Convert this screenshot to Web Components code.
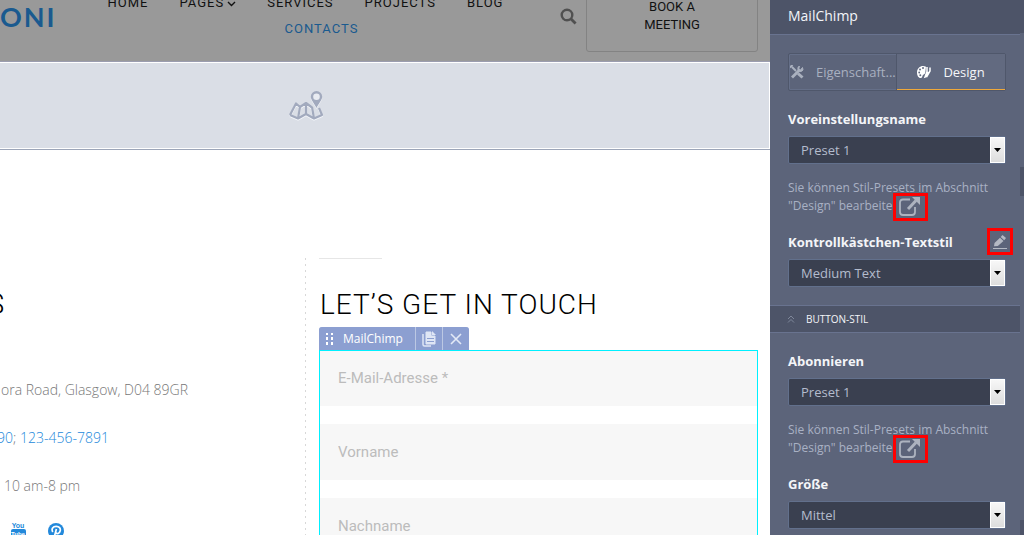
<!DOCTYPE html>
<html lang="de">
<head>
<meta charset="utf-8">
<title>MailChimp – Design</title>
<style>
html,body{margin:0;height:100%}
body{font-family:"Open Sans",sans-serif;background:#fff;overflow:hidden}
</style>
</head>
<body>
<editor-shell>
  <site-header></site-header>
  <map-block></map-block>
  <contact-section>
    <contact-details slot="details"></contact-details>
    <signup-form slot="form"></signup-form>
  </contact-section>
  <settings-panel slot="panel" heading="MailChimp">
    <select-field label="Voreinstellungsname" value="Preset 1"></select-field>
    <preset-hint>Sie können Stil-Presets im Abschnitt "Design" bearbeiten</preset-hint>
    <select-field label="Kontrollkästchen-Textstil" value="Medium Text" editable></select-field>
    <section-bar>BUTTON-STIL</section-bar>
    <select-field label="Abonnieren" value="Preset 1"></select-field>
    <preset-hint>Sie können Stil-Presets im Abschnitt "Design" bearbeiten</preset-hint>
    <select-field label="Größe" value="Mittel"></select-field>
  </settings-panel>
</editor-shell>

<script>
const define = (name, html) => customElements.define(name, class extends HTMLElement {
  constructor() {
    super();
    const t = document.createElement('template');
    t.innerHTML = typeof html === 'function' ? html(this) : html;
    this.attachShadow({ mode: 'open' }).append(t.content.cloneNode(true));
  }
});

define('editor-shell', `
<style>
:host{display:grid;grid-template-columns:minmax(0,1fr) 254px;height:100vh;overflow:hidden}
main{display:flex;flex-direction:column;min-height:0;overflow:hidden}
</style>
<main><slot></slot></main><slot name="panel"></slot>`);

define('site-header', `
<style>
:host{display:block;background:#999;overflow:hidden;border-bottom:1px solid #9b9db0;flex:none;font-family:Roboto,"Open Sans",sans-serif}
header{display:flex;align-items:flex-start;margin-top:-40px;height:101px;padding-right:12px}
a{text-decoration:none;color:#111}
.logo{flex:0 0 106px;padding-top:41px;font:700 27px/32px Lato,sans-serif;letter-spacing:2px;color:#1a5a8f}
nav{flex:0 1 399px;padding-top:30px}
ul{display:flex;flex-wrap:wrap;justify-content:center;column-gap:31px;list-style:none;margin:0;padding:0}
li{font-size:13px;line-height:26px;letter-spacing:1px}
.active{margin-left:32px}
.active a{color:#1a5a8f}
svg{display:block}
li svg{display:inline;margin-left:3px}
.search{border:0;background:none;padding:48px 0 0;margin-left:auto;margin-right:9px}
.book{box-sizing:border-box;flex:0 0 172px;height:92px;padding:37px 50px 0;border:1px solid #838383;border-radius:3px;text-align:center;font-size:13px;line-height:18px}
</style>
<header>
<a class="logo" href="#">ONI</a>
<nav><ul>
<li><a href="#">HOME</a></li>
<li><a href="#">PAGES<svg width="9" height="6" viewBox="0 0 9 6"><path d="M1 1l3.500 3.500L8 1" fill="none" stroke="#111" stroke-width="1.400"/></svg></a></li>
<li><a href="#">SERVICES</a></li>
<li><a href="#">PROJECTS</a></li>
<li><a href="#">BLOG</a></li>
<li class="active"><a href="#">CONTACTS</a></li>
</ul></nav>
<button class="search" aria-label="Search"><svg width="17" height="17" viewBox="0 0 17 17"><circle cx="7" cy="7" r="5.300" fill="none" stroke="#505050" stroke-width="2.400"/><path d="M10.800 10.800l4.800 4.800" stroke="#505050" stroke-width="2.800"/></svg></button>
<a class="book" href="#">BOOK A MEETING</a>
</header>`);

define('map-block', `
<style>
:host{display:block;flex:none;border-bottom:1px solid #9ca5b8}
div{height:85px;display:flex;justify-content:center;align-items:center;background:#dadee6;border:1px solid #fff;border-left:0;padding-right:158px}
svg{filter:drop-shadow(0 1px 0 #f4f6fa)}
</style>
<div><svg width="36" height="30" viewBox="0 0 36 30" fill="none" stroke="#a2aabe" stroke-width="2.200" stroke-linejoin="round">
<path d="M2 24L8 12.500l4 3.500 6-4 6 4.500M2 24l8 3.500 8-4.500 8 4.500 8-3.500-3-7M12 16L10 27.500M18 12v11M24 16L26 27.500"/>
<path d="M28.500 0a5.700 5.700 0 0 1 5.700 5.700c0 3-3.500 6.500-5.700 11.300-2.200-4.800-5.700-8.300-5.700-11.300A5.700 5.700 0 0 1 28.500 0z" fill="#a2aabe" stroke="none"/>
<circle cx="28.500" cy="5.700" r="3.300" fill="#e9ecf2" stroke="none"/>
</svg></div>`);

define('contact-section', `
<style>
:host{display:grid;grid-template-columns:306fr 452fr;padding:108px 12px 0 0;flex:1;min-height:0}
.left{position:relative;overflow:hidden;background:repeating-linear-gradient(#d8d8d8 0 2px,transparent 2px 6px) right top/1px 100% no-repeat}
.right{padding-left:13px;min-width:0}
</style>
<div class="left"><slot name="details"></slot></div>
<div class="right"><slot name="form"></slot></div>`);

define('contact-details', `
<style>
:host{display:block;font-weight:300;font-size:14px;line-height:24px;color:#777}
h2{margin:27px 0 55px -13px;font:300 29px/38px Roboto,sans-serif;color:#000}
p{margin:0 0 24px 1px}
.phone{margin-left:-3px}
.hours{margin-left:4px}
a{color:#2389db;text-decoration:none}
.social{display:flex;gap:21px;padding-left:11px}
svg{display:block}
</style>
<h2>S</h2>
<p>ora Road, Glasgow, D04 89GR</p>
<p class="phone"><a href="#">90</a>; <a href="#">123-456-7891</a></p>
<p class="hours">10 am-8 pm</p>
<div class="social">
<a href="#" aria-label="YouTube"><svg width="16" height="18" viewBox="0 0 16 18"><text x="7" y="6" text-anchor="middle" font-family="Liberation Sans" font-size="7" font-weight="700" fill="#2389db">You</text><rect y="7" width="15" height="11" rx="2" fill="#2389db"/><text x="7" y="14" text-anchor="middle" font-family="Liberation Sans" font-size="6" font-weight="700" fill="#fff">Tube</text></svg></a>
<a href="#" aria-label="Pinterest"><svg width="16" height="18" viewBox="0 0 16 18"><circle cx="8" cy="9" r="8" fill="#2389db"/><path d="M4.800 10C3 7 5 4.300 8.200 4.300c3 0 4.600 2 4 4.500-.6 2.800-3.200 3.600-4.200 2M8.400 7L6 16" fill="none" stroke="#fff" stroke-width="1.700"/></svg></a>
</div>`);

define('signup-form', `
<style>
:host{display:block}
hr{width:63px;height:1px;border:0;background:#e6e6e6;margin:0}
h2{margin:27px 0 3px 1px;font:300 28px/38px Roboto,sans-serif;letter-spacing:1px;color:#000;white-space:nowrap}
.bar{display:flex;width:max-content;height:23px;gap:1px;background:#bcc8e3;border-radius:3px 3px 0 0;overflow:hidden}
.bar button{border:0;padding:0;background:#8c9fd1;display:flex;align-items:center;justify-content:center;width:26px;color:#fff;font:12px/23px "Open Sans",sans-serif}
.bar .name{width:96px;justify-content:flex-start;gap:9px;padding-left:6px}
form{outline:1px solid #00f0ff;outline-offset:-1px;display:flex;flex-direction:column;gap:18px}
input{box-sizing:border-box;width:100%;height:56px;border:0;background:#f7f7f7;padding:0 19px;font:15px Roboto,sans-serif}
input::placeholder{color:#bcbcbc;opacity:1}
</style>
<hr>
<h2>LET’S GET IN TOUCH</h2>
<div class="bar">
<button class="name"><svg width="9" height="14" viewBox="0 0 9 14" fill="#fff"><path d="M1 1h2v2H1zM6 1h2v2H6zM1 5h2v3H1zM6 5h2v3H6zM1 10h2v3H1zM6 10h2v3H6z"/></svg>MailChimp</button>
<button aria-label="Duplizieren"><svg width="14" height="16" viewBox="0 0 14 16"><path d="M1 3v10.500q0 1.500 1.500 1.500H9" fill="none" stroke="#dfe6f5" stroke-width="1.500"/><path d="M4 1h5v4h4v8H4z" fill="#dfe6f5" stroke="#dfe6f5" stroke-linejoin="round"/><path d="M10 0l4 4h-4z" fill="#dfe6f5"/><path d="M5 7.500h7M5 10.500h7" stroke="#8c9fd1"/></svg></button>
<button aria-label="Entfernen"><svg width="12" height="12" viewBox="0 0 12 12"><path d="M1 1l10 10M11 1L1 11" stroke="#e3e9f6" stroke-width="1.600"/></svg></button>
</div>
<form>
<input type="email" aria-label="E-Mail-Adresse" placeholder="E-Mail-Adresse *">
<input type="text" aria-label="Vorname" placeholder="Vorname">
<input type="text" aria-label="Nachname" placeholder="Nachname">
</form>`);

define('settings-panel', el => `
<style>
:host{display:grid;grid-template-columns:1fr 4px;background:#5c647a;overflow:hidden;min-height:0}
.body{display:flex;flex-direction:column;min-width:0}
h1{margin:0;height:34px;background:#4d5468;border-bottom:1px solid #69738f;padding-left:18px;font:14px/32px "Open Sans",sans-serif;color:#f3f5f9}
.tabs{display:grid;grid-template-columns:1fr 1fr;margin:18px 14px 17px 18px;border:1px solid #4f576b;border-radius:2px;box-shadow:inset 0 0 0 1px #656f88}
.tabs button{height:36px;border:0;background:none;padding:0;display:flex;align-items:center;justify-content:center;gap:12px;font:13px "Open Sans",sans-serif;color:#a9b0c0}
.tabs .off{justify-content:flex-start;padding-left:1px;border-right:1px solid #4f576b;white-space:nowrap}
.tabs .on{background:#626a80;color:#f5f6f9;border-bottom:1px solid #f0a93a}
.strip{display:flex;flex-direction:column;border-top:33px solid #4d5468;padding-top:134px}
.strip i{height:29px;background:#4d5468}
.strip i+i{margin-top:324px;height:40px}
</style>
<div class="body">
<h1>${el.getAttribute('heading')}</h1>
<div class="tabs" role="tablist">
<button role="tab" class="off"><svg width="14" height="14" viewBox="0 0 14 14" fill="none" stroke="#aab1bf"><path d="M2 12.500l7.500-7.500" stroke-width="2.800"/><path d="M12.500 2.500L10.500 5 8.800 4l.5-3A3.500 3.500 0 0 0 8 5l1.500 1.500A3.500 3.500 0 0 0 13 5z" fill="#aab1bf"/><path d="M2 2l4 4" stroke-width="2"/><path d="M8 8.500l4.500 4" stroke-width="3"/><path d="M0 2.500L2.500 0" stroke-width="2"/></svg>Eigenschaft...</button>
<button role="tab" class="on" aria-selected="true"><svg width="14" height="14" viewBox="0 0 14 14"><path d="M6 1C3 1 0 3.500 0 7.500c0 3 1.500 5.500 3.500 5.500S5 11 6 10s2-.6 2.300-2.500L9 1.700C8 1.200 7 1 6 1z" fill="#fff"/><g fill="#626a80"><circle cx="3" cy="4.500" r="1"/><circle cx="6" cy="3" r="1"/><circle cx="2.200" cy="7.500" r=".9"/><circle cx="3.300" cy="10.300" r="1"/></g><path d="M10 2v4.500L8 12l1-.3L11.500 7M13 2.500V6L9.500 12" stroke="#fff" stroke-width="1.500" fill="none"/></svg>Design</button>
</div>
<slot></slot>
</div>
<div class="strip"><i></i><i></i></div>`);

define('select-field', el => `
<style>
:host{display:block;margin:0 14px 18px 18px}
.head{position:relative;line-height:20px}
label{font-size:13px;font-weight:700;color:#f4f5f8}
.edit{position:absolute;top:-3px;right:-7px;box-sizing:border-box;width:26px;height:27px;border:3px solid #f00;background:#5c647a;padding:0;display:grid;place-items:center}
.box{display:grid;margin-top:7px}
.box>*{grid-area:1/1}
select{appearance:none;width:100%;height:28px;border:1px solid #62708c;border-radius:2px;background:#3a4050;color:#b4bccd;font:13px "Open Sans",sans-serif;padding:0 20px 0 12px;margin:0}
.arrow{justify-self:end;width:15px;margin:1px;background:linear-gradient(#f8f8f8,#dcdcdc);outline:1px solid #fff;outline-offset:-1px;display:grid;place-items:center;pointer-events:none}
</style>
<div class="head"><label for="s">${el.getAttribute('label')}</label>${el.hasAttribute('editable') ? `
<button class="edit" aria-label="Bearbeiten"><svg width="14" height="16" viewBox="0 0 14 16" fill="#b4b9c4"><path d="M0 14h14v1H0zM9.500 1l3.500 3-1.800 2.200L7.700 3zM7 3.800L10.500 7 4.800 12 1 12.300 1.500 9z"/></svg></button>` : ''}</div>
<div class="box"><select id="s"><option>${el.getAttribute('value')}</option></select><span class="arrow"><svg width="7" height="4" viewBox="0 0 7 4"><path d="M0 0h7L3.500 4z"/></svg></span></div>`);

define('preset-hint', `
<style>
:host{display:block;position:relative;margin:-3px 14px 16px 18px;font-size:12px;line-height:18px;color:#a9b1c4}
p{margin:0}
a{position:absolute;left:105px;top:14px;box-sizing:border-box;width:35px;height:28px;border:3px solid #f00;background:#5c647a;display:flex;align-items:center;padding:0 0 2px 3px}
</style>
<p><slot></slot></p>
<a href="#" aria-label="Abschnitt Design öffnen"><svg width="22" height="20" viewBox="0 0 22 20" fill="none" stroke="#adb3bf" stroke-width="1.800"><path d="M11 3.500H4q-3 0-3 3V16q0 3 3 3h9q3 0 3-3v-5"/><path d="M9 13l8-8.500" stroke-width="3"/><path d="M13 1h8v8z" fill="#adb3bf" stroke="none"/></svg></a>`);

define('section-bar', `
<style>
:host{display:block;margin-bottom:17px}
button{width:100%;height:28px;border:solid #69738f;border-width:1px 0;background:#4d5468;display:flex;align-items:center;gap:11px;padding:0 0 0 17px;color:#f4f5f8;font:10px "Open Sans",sans-serif}
</style>
<button><svg width="8" height="8" viewBox="0 0 8 8" fill="none" stroke="#7f879a"><path d="M1 4l3-3 3 3M1 7.500l3-3 3 3"/></svg><span><slot></slot></span></button>`);
</script>
</body>
</html>
